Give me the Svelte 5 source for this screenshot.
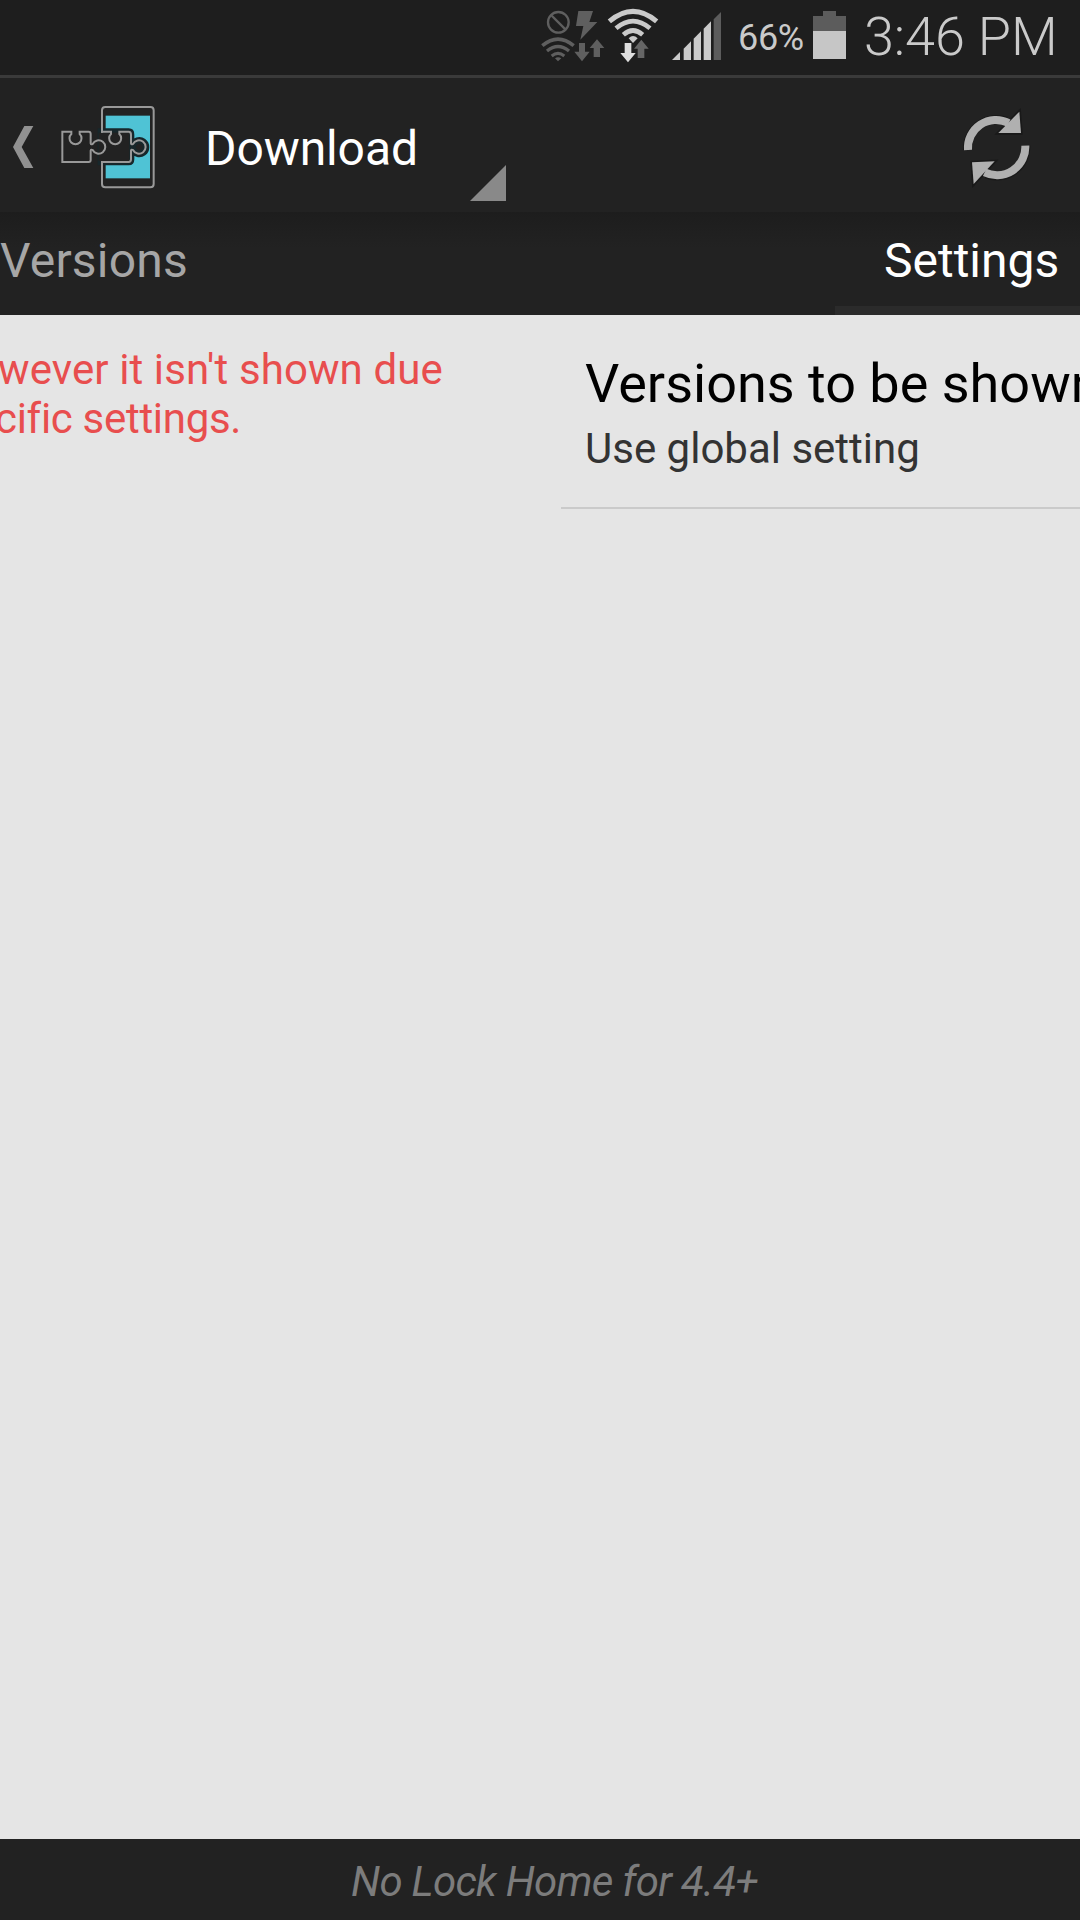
<script>
  const clock = '3:46 PM'
  const batteryLevel = 66

  const tabs = [
    { label: 'Versions', active: false },
    { label: 'Settings', active: true }
  ]

  const signalBars = [
    'M426 180L450 156V180Z',
    'M461 180V146L483 124V180Z',
    'M491 180V116L513 94V180Z',
    'M521 180V86L543 64V180Z'
  ]
</script>

<div class="screen">
  <div class="status-bar">
    <svg class="muted" viewBox="30 0 198 225">
      <g fill="none" stroke="#5f5f5f">
        <circle cx="85" cy="67" r="31" stroke-width="7" />
        <path d="M63 45L107 89" stroke-width="7" />
        <path d="M37 137Q84 98 131 137" stroke-width="11" />
        <path d="M51 153Q84 126 117 153" stroke-width="10" />
        <path d="M65 168Q84 152 103 168" stroke-width="9" />
      </g>
      <g fill="#5f5f5f">
        <path d="M75 175Q84 168 94 175L84 184Z" />
        <path d="M145 33H189L178 66H202L151 119L160 78H138Z" />
        <path d="M147 129H165V155H179L156 184L133 155H147Z" />
        <path d="M201 118L223 144H210V171H191V144H179Z" />
      </g>
    </svg>
    <svg class="wifi" viewBox="228 0 162 225">
      <g fill="none" stroke="#cacaca">
        <path d="M238 64Q309 4 380 64" stroke-width="15" />
        <path d="M258 85Q309 42 360 85" stroke-width="14" />
        <path d="M280 104Q309 79 338 104" stroke-width="14" />
      </g>
      <path d="M296 115Q309 101 323 115L309 129Z" fill="#cacaca" />
      <path d="M284 129H304V159H317L294 187L271 159H284Z" fill="#dedede" />
      <path d="M334 119L356 146H343V174H323V146H312Z" fill="#666" />
    </svg>
    <svg class="signal" viewBox="420 0 156 225">
      {#each signalBars as bar}
        <path d={bar} fill="#cacaca" />
      {/each}
      <path d="M551 180V58L573 36V180Z" fill="#5c5c5c" />
    </svg>
    <span class="percent">{batteryLevel}%</span>
    <div class="battery">
      <div class="battery-cap"></div>
      <div class="battery-body">
        <div class="battery-fill" style="height: {batteryLevel}%"></div>
      </div>
    </div>
    <span class="clock">{clock}</span>
  </div>

  <header>
    <svg class="back" viewBox="39 0 62 402">
      <path d="M73 138H100L65 201L100 264H73L39 201Z" fill="#919191" />
    </svg>
    <svg class="logo" viewBox="180 0 288 402">
      <rect x="317" y="107" width="133" height="188" fill="#4fc3d5" />
      <path
        d="M303 155H386Q393 155 393 164V193L399 195A20 20 0 1 1 399 208L393 210V238Q393 246 386 246H303Z"
        fill="#222"
        stroke="#17272b"
        stroke-width="20"
      />
      <path d="M296 158H388V243H296Z" fill="#222" />
      <g fill="none" stroke="#999" stroke-width="6">
        <path d="M303 155H306V91Q306 81 316 81H451Q461 81 461 91V312Q461 322 451 322H316Q306 322 306 312V246H303" />
        <path d="M303 155H333V162A18 18 0 1 0 358 162V155H386Q393 155 393 164V190Q394 195 399 192A20 20 0 1 1 399 210Q394 207 393 212V238Q393 246 386 246H303" />
        <path d="M187 155H214V162A18 18 0 1 0 239 162V155H266Q272 155 272 162V190Q273 195 278 192A20 20 0 1 1 278 210Q273 207 272 212V240Q272 246 266 246H187Z" />
      </g>
    </svg>
    <div class="spinner">
      <h1>Download</h1>
      <svg class="corner" viewBox="0 0 36 36">
        <path d="M36 0V36H0Z" fill="#898989" />
      </svg>
    </div>
    <svg class="refresh" viewBox="90 0 222 402">
      <g class="shadow">
        <path d="M104 210A95 95 0 0 1 232 116" />
        <path d="M268 95L273 159L205 159Z" />
        <path d="M296 197A95 95 0 0 1 167 290" />
        <path d="M131 312L126 247L194 244Z" />
      </g>
      <g fill="none" stroke="#b0b0b0" stroke-width="24">
        <path d="M114 210A84 84 0 0 1 236 129" />
        <path d="M286 197A85 85 0 0 1 164 277" />
      </g>
      <path d="M268 95L273 159L205 159Z" fill="#b0b0b0" />
      <path d="M131 312L126 247L194 244Z" fill="#b0b0b0" />
    </svg>
  </header>

  <nav>
    {#each tabs as tab}
      <span class="tab" class:active={tab.active}>{tab.label}</span>
    {/each}
  </nav>

  <main>
    <section class="versions">
      <p>wever it isn't shown due</p>
      <p class="wrapped">cific settings.</p>
    </section>
    <section class="settings">
      <div class="preference">
        <div class="title">Versions to be shown</div>
        <div class="summary">Use global setting</div>
      </div>
    </section>
  </main>

  <footer>No Lock Home for 4.4+</footer>
</div>

<style>
  :global(body) {
    margin: 0;
    background: #222;
  }

  .screen {
    width: 1080px;
    height: 1920px;
    display: flex;
    flex-direction: column;
    overflow: hidden;
    background: #222;
    font-family: Roboto, 'Noto Sans', sans-serif;
    white-space: nowrap;
  }

  svg {
    display: block;
    flex: none;
  }

  .status-bar {
    display: flex;
    height: 75px;
    flex: none;
    padding-left: 540px;
    background: #1e1e1e;
    border-bottom: 3px solid #3a3a3a;
    color: #cacaca;
  }

  .muted {
    width: 66px;
    height: 75px;
  }

  .wifi {
    width: 54px;
    height: 75px;
  }

  .signal {
    width: 52px;
    height: 75px;
    margin-left: 10px;
  }

  .percent {
    width: 75px;
    margin-left: 16px;
    font-size: 36px;
    letter-spacing: -0.3px;
    line-height: 76px;
  }

  .battery {
    width: 33px;
    padding-top: 11px;
  }

  .battery-cap {
    width: 13px;
    height: 5px;
    margin: 0 auto;
    background: #5c5c5c;
  }

  .battery-body {
    display: flex;
    align-items: flex-end;
    height: 43px;
    background: #5c5c5c;
  }

  .battery-fill {
    width: 100%;
    background: #c6c6c6;
  }

  .clock {
    margin-left: 18px;
    font-size: 54px;
    font-weight: 300;
    letter-spacing: -0.1px;
    line-height: 73px;
  }

  header {
    display: flex;
    height: 134px;
    flex: none;
  }

  .back {
    width: 20.67px;
    height: 134px;
    margin: 2px 0 0 13px;
  }

  .logo {
    width: 96px;
    height: 134px;
    margin: 2px 0 0 26.33px;
  }

  .spinner {
    display: flex;
    flex: none;
    justify-content: space-between;
    align-items: flex-end;
    width: 301px;
    height: 123px;
    margin-left: 49px;
  }

  .corner {
    width: 36px;
    height: 36px;
  }

  h1 {
    align-self: flex-start;
    margin: 0;
    color: #fff;
    font-size: 48px;
    font-weight: 400;
    letter-spacing: -0.1px;
    line-height: 141px;
  }

  .refresh {
    width: 74px;
    height: 134px;
    margin: 2px 46px 0 auto;
  }

  .shadow {
    fill: none;
    stroke: #191919;
    stroke-width: 10;
  }

  nav {
    display: flex;
    justify-content: space-between;
    height: 103px;
    flex: none;
    background: linear-gradient(#1d1d1d, #222 35%);
    font-size: 48px;
    line-height: 97px;
  }

  .tab {
    box-sizing: border-box;
    height: 103px;
    color: #a6a6a6;
    letter-spacing: 0.2px;
  }

  .tab.active {
    width: 245px;
    padding-left: 49px;
    border-bottom: 9px solid #2b2b2b;
    color: #fff;
    letter-spacing: 0;
  }

  main {
    display: flex;
    flex: 1;
    background: #e5e5e5;
  }

  .versions {
    width: 561px;
    flex: none;
    padding-top: 30px;
    color: #e84e4e;
    font-size: 42px;
    line-height: 49px;
  }

  .versions p {
    margin: 0 0 0 -2px;
    letter-spacing: 0.1px;
  }

  .versions .wrapped {
    margin-left: -5px;
    letter-spacing: -0.3px;
  }

  .settings {
    flex: 1;
    overflow: hidden;
  }

  .preference {
    box-sizing: border-box;
    height: 194px;
    padding: 38px 0 0 24px;
    border-bottom: 2px solid #cacaca;
  }

  .title {
    color: #000;
    font-size: 54px;
    line-height: 62px;
  }

  .summary {
    margin-top: 9px;
    color: #333;
    font-size: 42px;
    line-height: 49px;
  }

  footer {
    height: 81px;
    flex: none;
    padding-left: 29px;
    color: #7c7c7c;
    font-size: 42px;
    font-style: italic;
    letter-spacing: -0.68px;
    line-height: 85px;
    text-align: center;
  }
</style>
